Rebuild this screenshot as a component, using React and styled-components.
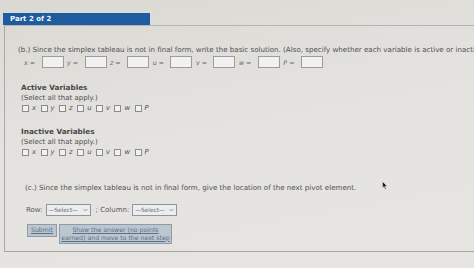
import React from "react";
import styled, { createGlobalStyle } from "styled-components";

const Global = createGlobalStyle`
  html, body {
    margin: 0;
    padding: 0;
  }
  body {
    width: 474px;
    height: 268px;
    overflow: hidden;
    background: linear-gradient(170deg, #d9d8d3 0%, #e3e2de 40%, #e6e5e1 100%);
    font-family: "DejaVu Sans", Verdana, sans-serif;
    color: #4f4f4d;
  }
`;

const Page = styled.div`
  position: relative;
  padding: 13px 0 0 3px;
`;

const Tab = styled.div`
  width: 140px;
  height: 12px;
  line-height: 12px;
  padding-left: 7px;
  background: #1f5b9f;
  color: #f4f6fa;
  font-size: 7px;
  font-weight: bold;
`;

const Panel = styled.div`
  margin-left: 1px;
  height: 227px;
  border-top: 1px solid #b4b4b0;
  border-left: 1px solid #a9a9a6;
  border-bottom: 1px solid #a6a6a3;
  padding: 19px 0 0 13px;
  box-sizing: border-box;
`;

const Prompt = styled.div`
  font-size: 7.1px;
  white-space: nowrap;
  line-height: 9px;
  margin: ${(p) => p.$m || "0"};
`;

const InputRow = styled.div`
  display: flex;
  align-items: center;
  gap: 3.5px;
  margin: 2px 0 0 6px;
`;

const Field = styled.label`
  display: flex;
  align-items: center;
  gap: 6.5px;
  font-size: 6.3px;
  color: #666664;
  i {
    font-style: italic;
  }
`;

const Box = styled.span`
  display: inline-block;
  width: 20px;
  height: 10px;
  background: #f1f1ef;
  border: 1px solid #9c9c9a;
`;

const Group = styled.div`
  margin: ${(p) => p.$top}px 0 0 3px;
`;

const Heading = styled.div`
  font-size: 7.3px;
  font-weight: bold;
  line-height: 10px;
  color: #484846;
`;

const Hint = styled.div`
  font-size: 7px;
  line-height: 11px;
`;

const Checks = styled.div`
  display: flex;
  align-items: center;
  gap: 4.5px;
  margin-left: 1px;
`;

const Check = styled.span`
  display: flex;
  align-items: center;
  gap: 3px;
  font-size: 6.8px;
  font-style: italic;
  &::before {
    content: "";
    width: 5px;
    height: 5px;
    background: #f1f1ef;
    border: 1px solid #8c8c8a;
  }
`;

const Controls = styled.div`
  display: flex;
  align-items: center;
  gap: 3px;
  margin: 12px 0 0 8px;
  font-size: 7px;
  color: #5a5a58;
`;

const Label = styled.span`
  margin-right: ${(p) => p.$gap || 0}px;
`;

const Select = styled.span`
  display: inline-flex;
  align-items: center;
  justify-content: space-between;
  width: 39px;
  height: 10px;
  padding: 0 2px;
  border: 1px solid #8b97a1;
  background: #ecedec;
  font-size: 5.8px;
  color: #5f6870;
`;

const Buttons = styled.div`
  display: flex;
  align-items: flex-start;
  gap: 2px;
  margin: 8px 0 0 9px;
`;

const Button = styled.span`
  display: inline-block;
  width: ${(p) => p.$w}px;
  padding: 1px 0 2px;
  background: #bcc6ce;
  border: 1px solid #8f9ca7;
  color: #56718c;
  font-size: 6.2px;
  line-height: 7.5px;
  text-align: center;
  text-decoration: underline;
`;

const Cursor = styled.svg`
  position: absolute;
  left: 382px;
  top: 181px;
`;

const Chevron = () => (
  <svg width="5" height="4" viewBox="0 0 5 4">
    <path d="M0.5 1 L2.5 3 L4.5 1" fill="none" stroke="#7e8890" strokeWidth="0.8" />
  </svg>
);

const vars = ["x", "y", "z", "u", "v", "w", "P"];

const CheckGroup = ({ title, top }) => (
  <Group $top={top}>
    <Heading>{title}</Heading>
    <Hint>(Select all that apply.)</Hint>
    <Checks>
      {vars.map((v) => (
        <Check key={v}>{v}</Check>
      ))}
    </Checks>
  </Group>
);

export default function App() {
  return (
    <>
      <Global />
      <Page>
        <Tab>Part 2 of 2</Tab>
        <Panel>
          <Prompt>
            (b.) Since the simplex tableau is not in final form, write the basic solution. (Also,
            specify whether each variable is active or inactive.)
          </Prompt>
          <InputRow>
            {vars.map((v) => (
              <Field key={v}>
                <span>
                  <i>{v}</i> =
                </span>
                <Box />
              </Field>
            ))}
          </InputRow>

          <CheckGroup title="Active Variables" top={15} />
          <CheckGroup title="Inactive Variables" top={15} />

          <Prompt $m="27px 0 0 7px">
            (c.) Since the simplex tableau is not in final form, give the location of the next pivot
            element.
          </Prompt>
          <Controls>
            <span>Row:</span>
            <Label $gap={2}>
              <Select>
                —Select— <Chevron />
              </Select>
            </Label>
            <span>; Column:</span>
            <Select>
              —Select— <Chevron />
            </Select>
          </Controls>
          <Buttons>
            <Button $w={28}>Submit</Button>
            <Button $w={111}>
              Show the answer (no points
              <br />
              earned) and move to the next step
            </Button>
          </Buttons>
        </Panel>
        <Cursor width="6" height="9" viewBox="0 0 6 9">
          <path d="M0.5 0.5 L0.5 7 L2 5.6 L3.2 8.3 L4.2 7.9 L3 5.2 L5.2 5.2 Z" fill="#1a1a1a" stroke="#e8e8e8" strokeWidth="0.5" />
        </Cursor>
      </Page>
    </>
  );
}
